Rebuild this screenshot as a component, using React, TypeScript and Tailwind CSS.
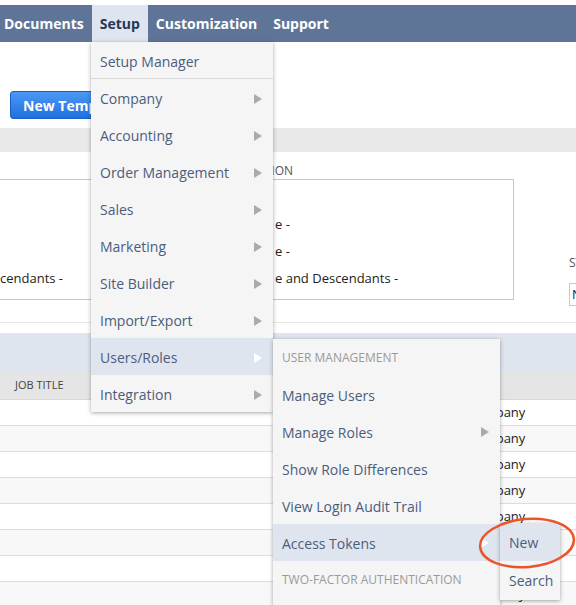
import React from "react";

const navItems = ["Documents", "Setup", "Customization", "Support"];

const setupItems: { label: string; sub?: boolean; active?: boolean }[] = [
  { label: "Company", sub: true },
  { label: "Accounting", sub: true },
  { label: "Order Management", sub: true },
  { label: "Sales", sub: true },
  { label: "Marketing", sub: true },
  { label: "Site Builder", sub: true },
  { label: "Import/Export", sub: true },
  { label: "Users/Roles", sub: true, active: true },
  { label: "Integration", sub: true },
];

type SubRow = { label: string; header?: boolean; sub?: boolean; active?: boolean };

const userItems: SubRow[] = [
  { label: "User Management", header: true },
  { label: "Manage Users" },
  { label: "Manage Roles", sub: true },
  { label: "Show Role Differences" },
  { label: "View Login Audit Trail" },
  { label: "Access Tokens", sub: true, active: true },
  { label: "Two-Factor Authentication", header: true },
  { label: "Two-Factor Authentication Roles" },
];

// list box options: lead part sits under the menu / off screen
const leftOptions = [
  { lead: "- All -", tail: "" },
  { lead: "- None -", tail: "" },
  { lead: "- My Department -", tail: "" },
  { lead: "- My Department and Des", tail: "cendants -" },
];

const rightOptions = [
  { lead: "- All -", tail: "" },
  { lead: "- Non", tail: "e -" },
  { lead: "- Sam", tail: "e -" },
  { lead: "- Sam", tail: "e and Descendants -" },
];

function Arrow({ white }: { white?: boolean }) {
  return (
    <svg width="8" height="10" viewBox="0 0 8 10" className="shrink-0">
      <polygon points="0,0 8,5 0,10" fill={white ? "#ffffff" : "#aaaaaa"} />
    </svg>
  );
}

function ListBox({
  options,
  leadWidth,
  className,
}: {
  options: { lead: string; tail: string }[];
  leadWidth: string;
  className?: string;
}) {
  return (
    <div
      className={`h-[121px] overflow-hidden border border-[#c9c9c9] px-1 pt-[4px] text-[13px] leading-[27px] text-[#222] ${className ?? ""}`}
    >
      {options.map((o, i) => (
        <div key={i} className="flex whitespace-nowrap">
          <span className={`${leadWidth} shrink-0 overflow-hidden`}>{o.lead}</span>
          <span>{o.tail}</span>
        </div>
      ))}
    </div>
  );
}

export default function App() {
  const rows = Array.from({ length: 8 });

  return (
    <div className="relative h-[605px] w-[576px] overflow-hidden bg-white font-['Open_Sans',sans-serif]">
      <div className="h-[5px]" />

      {/* top navigation */}
      <nav className="flex h-[37px] items-stretch bg-[#5f7598]">
        {navItems.map((item, i) => (
          <div
            key={item}
            className={`flex items-center px-2 text-[14px] font-bold ${i === 0 ? "-ml-1" : ""} ${
              item === "Setup" ? "bg-[#dfe5ee] text-[#23375a]" : "text-white"
            }`}
          >
            {item}
          </div>
        ))}
      </nav>

      {/* page actions */}
      <div className="h-[86px] pl-[10px] pt-[49px]">
        <button className="h-[28px] rounded-[3px] border border-[#1c5fc2] bg-linear-to-b from-[#4b98f4] to-[#1f70e0] pl-[12px] pr-4 text-[14px] font-bold text-white">
          New Template
        </button>
      </div>

      <div className="h-[24px] bg-[#e9e9e9]" />

      {/* filters */}
      <div className="flex h-[171px] items-start border-b border-[#e6e6e6] pt-[10px]">
        <div className="-ml-[180px] w-[272px] shrink-0">
          <div className="h-[17px] text-[12px] leading-[17px] text-[#555]">DEPARTMENT</div>
          <ListBox options={leftOptions} leadWidth="w-[175px]" />
        </div>
        <div className="ml-[142px] w-[280px] shrink-0">
          <div className="h-[17px] text-[12px] leading-[17px] text-[#555]">LOCATION</div>
          <ListBox options={rightOptions} leadWidth="w-[36px]" />
        </div>
        <div className="ml-[55px] mt-[92px] w-[120px] shrink-0">
          <div className="h-[17px] text-[12px] leading-[17px] text-[#555]">STATUS</div>
          <div className="mt-[12px] h-[23px] border border-[#c9c9c9] pl-[2px] text-[13px] leading-[21px] text-[#1a1a4a]">
            No
          </div>
        </div>
      </div>

      <div className="h-[10px]" />

      {/* list */}
      <div className="h-[39px] bg-[#dfe5ee]" />
      <div className="flex h-[28px] items-center border-b border-[#d8d8d8] bg-[#e5e5e5] pl-[15px] text-[11px] text-[#444]">
        JOB TITLE
      </div>
      {rows.map((_, i) => (
        <div
          key={i}
          className={`flex h-[26px] items-center border-b border-[#dddddd] text-[13px] text-[#222] ${
            i % 2 === 0 ? "bg-white" : "bg-[#f8f8f8]"
          }`}
        >
          <div className="w-[424px] shrink-0" />
          <div className="whitespace-nowrap">Parent Company</div>
        </div>
      ))}

      {/* Setup dropdown */}
      <div className="absolute left-[91px] top-[42px] w-[182px] bg-[#f5f5f5] text-[14px] text-[#4b5d7c] shadow-[0_1px_4px_rgba(0,0,0,0.35)]">
        <div className="flex h-[37px] items-center border-b border-[#d9d9d9] pl-[9px] pt-[2px]">Setup Manager</div>
        {setupItems.map((it) => (
          <div
            key={it.label}
            className={`flex h-[37px] items-center justify-between pl-[9px] pr-[11px] pt-[2px] ${
              it.active ? "bg-[#dfe5ee]" : ""
            }`}
          >
            <span>{it.label}</span>
            {it.sub && <Arrow white={it.active} />}
          </div>
        ))}
      </div>

      {/* Users/Roles submenu */}
      <div className="absolute left-[273px] top-[339px] w-[227px] bg-[#f5f5f5] text-[14px] text-[#4b5d7c] shadow-[0_1px_4px_rgba(0,0,0,0.35)]">
        {userItems.map((it) => (
          <div
            key={it.label}
            className={`flex h-[37px] items-center justify-between pl-[9px] pr-[11px] pt-px ${
              it.active ? "bg-[#dfe5ee]" : ""
            } ${it.header ? "text-[12px] uppercase text-[#9a9a9a]" : ""}`}
          >
            <span className="whitespace-nowrap">{it.label}</span>
            {it.sub && <Arrow white={it.active} />}
          </div>
        ))}
      </div>

      {/* Access Tokens submenu */}
      <div className="absolute left-[500px] top-[523px] w-[60px] bg-[#f5f5f5] text-[14px] text-[#4b5d7c] shadow-[0_1px_4px_rgba(0,0,0,0.35)]">
        <div className="flex h-[38px] items-center bg-[#dfe5ee] pl-[9px] pt-px">New</div>
        <div className="flex h-[39px] items-center pl-[9px]">Search</div>
      </div>

      {/* red annotation */}
      <svg className="absolute left-[476px] top-[514px]" width="100" height="58" viewBox="0 0 100 58">
        <ellipse
          cx="51"
          cy="29"
          rx="47"
          ry="24"
          transform="rotate(-5 51 29)"
          fill="none"
          stroke="#ea552b"
          strokeWidth="2.5"
        />
      </svg>
    </div>
  );
}
